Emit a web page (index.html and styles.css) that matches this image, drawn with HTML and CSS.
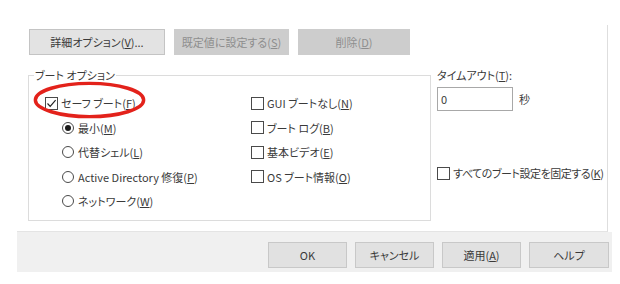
FILE: index.html
```html
<!DOCTYPE html>
<html lang="ja">
<head>
<meta charset="utf-8">
<link rel="stylesheet" href="styles.css">
</head>
<body>
<div class="page">
  <div class="panel">
    <div class="toprow">
      <button class="btn b1">詳細オプション(<u>V</u>)...</button>
      <button class="btn b2 disabled">既定値に設定する(<u>S</u>)</button>
      <button class="btn b3 disabled">削除(<u>D</u>)</button>
    </div>
    <div class="main">
      <fieldset class="group">
        <legend>ブート オプション</legend>
        <div class="grid">
          <div class="col">
            <div class="row"><span class="cb"><svg viewBox="0 0 13 13" width="13" height="13"><path d="M2.5 6.5 L5.2 9.3 L10.6 3.2" fill="none" stroke="#222" stroke-width="1.2"/></svg></span>セーフ ブート(<u>F</u>)</div>
            <div class="row sub"><span class="rb on"></span>最小(<u>M</u>)</div>
            <div class="row sub"><span class="rb"></span>代替シェル(<u>L</u>)</div>
            <div class="row sub"><span class="rb"></span>Active Directory&nbsp;修復(<u>P</u>)</div>
            <div class="row sub"><span class="rb"></span>ネットワーク(<u>W</u>)</div>
          </div>
          <div class="col">
            <div class="row"><span class="cb"></span>GUI ブートなし(<u>N</u>)</div>
            <div class="row"><span class="cb"></span>ブート ログ(<u>B</u>)</div>
            <div class="row"><span class="cb"></span>基本ビデオ(<u>E</u>)</div>
            <div class="row"><span class="cb"></span>OS ブート情報(<u>O</u>)</div>
          </div>
        </div>
        <svg class="ring" viewBox="0 0 120 40" width="120" height="40"><ellipse cx="60" cy="20" rx="57" ry="17.5" fill="none" stroke="#e3221b" stroke-width="3.6"/></svg>
      </fieldset>
      <div class="side">
        <div class="lbl">タイムアウト(<u>T</u>):</div>
        <div class="tline"><span class="input">0</span><span class="unit">秒</span></div>
        <div class="row lock"><span class="cb"></span><span class="locktext">すべてのブート設定を固定する(<u>K</u>)</span></div>
      </div>
    </div>
  </div>
  <div class="footer">
    <button class="btn fb">OK</button>
    <button class="btn fb">キャンセル</button>
    <button class="btn fb">適用(<u>A</u>)</button>
    <button class="btn fb last">ヘルプ</button>
  </div>
</div>
</body>
</html>
```
FILE: styles.css
```css
* { box-sizing: border-box; }
html, body { margin: 0; padding: 0; background: #fff; }
body {
  width: 620px; height: 284px; overflow: hidden;
  font-family: "Noto Sans CJK JP", "Noto Sans", sans-serif;
  font-size: 11px; color: #3a3a3a;
  font-feature-settings: "palt";
}
u { text-decoration: underline; text-underline-offset: 1px; }
.page { padding-top: 25px; }
.panel {
  margin-left: 17px; width: 591px; height: 207px;
  border-right: 1px solid #dedede; border-bottom: 1px solid #e4e4e4;
  padding: 4px 0 0 12px;
}
.toprow { display: flex; gap: 8px; height: 26px; }
.btn {
  font: inherit; color: #3a3a3a; height: 26px; padding: 0;
  background: #e3e3e3; border: 1px solid #c4c4c4; font-feature-settings: "palt";
}
.b1 { width: 136px; }
.b2 { width: 115px; margin-left: 1px; }
.b3 { width: 112px; margin-left: 1px; }
.disabled { background: #cdcdcd; border-color: #cdcdcd; color: #8e8e8e; }
.main { display: flex; margin-top: 12px; }
.group {
  position: relative; flex: none; margin: 0 0 0 -1px; width: 403px; height: 154px;
  border: 1px solid #dcdcdc; padding: 8px 0 0 16px; min-width: 0;
}
.group legend { padding: 0 1px; margin-left: -11px; line-height: 16px; }
.grid { display: grid; grid-template-columns: 206px 1fr; }
.row { display: flex; align-items: center; height: 24.5px; white-space: nowrap; }
.row.sub { padding-left: 17px; }
.cb {
  width: 13px; height: 13px; border: 1px solid #4a4a4a; background: #fff;
  margin-right: 3px; flex: none; display: flex;
}
.cb svg { margin: -1px; }
.rb {
  width: 12px; height: 12px; border: 1px solid #4a4a4a; border-radius: 50%;
  margin-right: 4px; flex: none; display: flex; align-items: center; justify-content: center;
}
.rb.on::after { content: ""; width: 6px; height: 6px; border-radius: 50%; background: #1a1a1a; }
.ring { position: absolute; left: 2px; top: -2px; width: 117px; height: 38px; }
.side { flex: none; margin-left: 6px; display: flex; flex-direction: column; }
.lbl { line-height: 16px; }
.tline { display: flex; align-items: center; margin-top: 4px; }
.input {
  width: 76px; height: 24px; border: 1px solid #a8a8a8; padding: 2px 0 0 3px; line-height: 18px;
}
.unit { margin-left: 6px; }
.lock { margin-top: 50px; }
.locktext { letter-spacing: -0.45px; }
.footer {
  margin-left: 17px; width: 595px; height: 40px; background: #f0f0f0;
  display: flex; justify-content: flex-end; gap: 8px; padding: 10px 3px 0 0;
}
.fb { width: 79px; height: 26px; background: #e1e1e1; border-color: #c8c8c8; }
.fb.last { width: 80px; }
```
